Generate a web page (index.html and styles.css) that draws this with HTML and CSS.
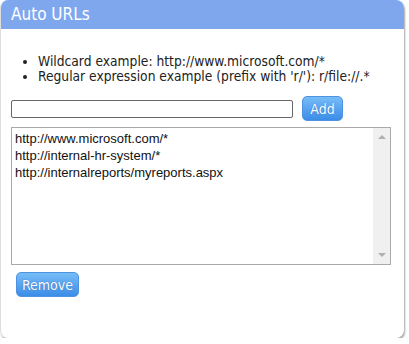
FILE: index.html
```html
<!DOCTYPE html>
<html>
<head>
  <title>Auto URLs</title>
  <link rel="stylesheet" href="styles.css">
</head>
<body>
  <div class="panel">
    <div class="panel-header">Auto URLs</div>
    <div class="panel-body">
      <ul class="hints">
        <li>Wildcard example: http://www.microsoft.com/*</li>
        <li>Regular expression example (prefix with 'r/'): r/file://.*</li>
      </ul>
      <div class="add-row">
        <input type="text" class="url-input">
        <button class="btn add">Add</button>
      </div>
      <div class="url-list">
        <div class="url-items">
          <div>http://www.microsoft.com/*</div>
          <div>http://internal-hr-system/*</div>
          <div>http://internalreports/myreports.aspx</div>
        </div>
        <div class="scrollbar">
          <span class="arrow up"></span>
          <span class="arrow down"></span>
        </div>
      </div>
      <button class="btn remove">Remove</button>
    </div>
  </div>
</body>
</html>
```

FILE: styles.css
```css
body {
  margin: 0;
  background: #fff;
  font-family: 'DejaVu Sans Condensed', 'DejaVu Sans', sans-serif;
  color: #222;
}

.panel {
  width: 403px;
  height: 338px;
  border-left: 1px solid #ddd;
  border-radius: 8px;
  box-shadow: 1px 2px 2px rgba(0, 0, 0, 0.35);
  overflow: hidden;
}

.panel-header {
  height: 29px;
  background-color: #7ea7ee;
  color: #fff;
  font-size: 17px;
  line-height: 29px;
  padding-left: 10px;
}

.panel-body {
  padding: 25px 0 0 10px;
}

.hints {
  margin: 0;
  padding-left: 27px;
  font-size: 13.7px;
  line-height: 15px;
}

.add-row {
  display: flex;
  align-items: center;
  margin-top: 12px;
}

.url-input {
  width: 278px;
  height: 14px;
  margin: 0;
  padding: 1px;
  border: 1px solid #666;
  border-radius: 2px;
  box-sizing: content-box;
}

.btn {
  font-family: 'DejaVu Sans Condensed', 'DejaVu Sans', sans-serif;
  font-size: 14px;
  color: #fff;
  text-shadow: 0 0 1px #1c5fb8;
  background: linear-gradient(#76bcf7, #3c8de8);
  border: 1px solid #4d93e0;
  border-radius: 5px;
  height: 25px;
  padding: 0;
}

.add {
  width: 41px;
  margin-left: 9px;
}

.url-list {
  display: flex;
  width: 378px;
  height: 136px;
  margin-top: 6px;
  border: 1px solid #aaa;
}

.url-items {
  flex: 1;
  font-family: 'Liberation Sans', Arial, sans-serif;
  font-size: 13px;
  line-height: 17px;
  padding: 2px 0 0 3px;
  color: #111;
}

.scrollbar {
  width: 17px;
  background-color: #f0f0f0;
  display: flex;
  flex-direction: column;
  justify-content: space-between;
  align-items: center;
  padding: 7px 0;
}

.arrow {
  width: 0;
  height: 0;
  border-left: 4px solid transparent;
  border-right: 4px solid transparent;
}

.arrow.up {
  border-bottom: 4px solid #b0b0b0;
}

.arrow.down {
  border-top: 4px solid #b0b0b0;
}

.remove {
  display: block;
  width: 63px;
  margin: 7px 0 0 5px;
}
```
